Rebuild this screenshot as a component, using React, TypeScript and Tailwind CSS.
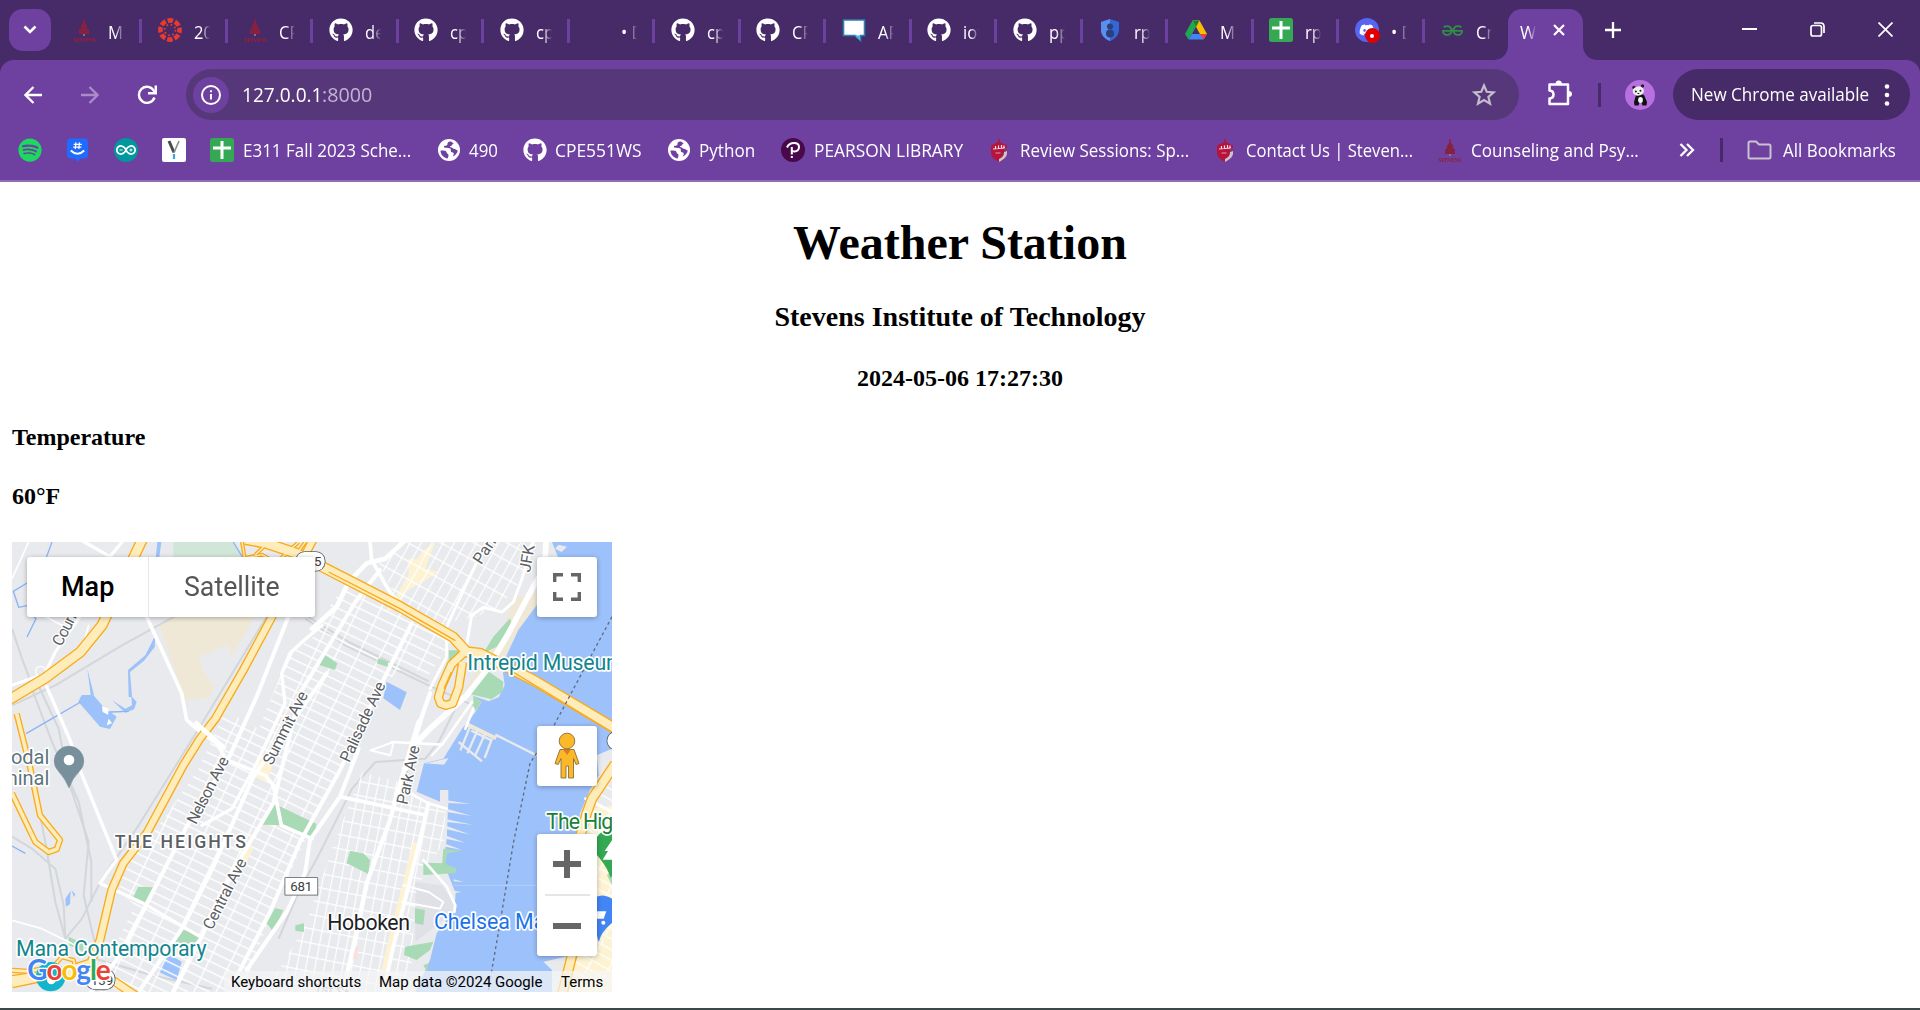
import { useLayoutEffect, useRef, useState, type ReactNode } from "react";
import { FaDiscord, FaGithub, FaSpotify } from "react-icons/fa";
import { SiArduino, SiGeeksforgeeks } from "react-icons/si";

/* Single-line label squeezed or stretched to an exact width. */
function Fit({ w, children, className = "" }: { w: number; children: ReactNode; className?: string }) {
  const ref = useRef<HTMLSpanElement>(null);
  const [scale, setScale] = useState(1);
  useLayoutEffect(() => {
    if (ref.current) setScale(w / ref.current.offsetWidth);
  }, [w]);
  return (
    <span className={`block shrink-0 whitespace-nowrap ${className}`} style={{ width: w }}>
      <span ref={ref} className="inline-block origin-left" style={{ transform: `scaleX(${scale})` }}>
        {children}
      </span>
    </span>
  );
}

const Github = () => <FaGithub className="size-6 text-white" />;

const Globe = () => (
  <svg viewBox="0 0 22 22" className="size-[22px]">
    <circle cx="11" cy="11" r="11" fill="#fff" />
    <path d="M13 2.500c-3 0-3.500 1.200-3.500 2.600 0 1.500-1.500 1.800-3.500 1.800v1.600c3 .4 6 .3 6.500 1.300.8 1.500-.2 2.500.8 3.300 1 .6 2.500.2 2.500 1.800 0 1-1 1.400-1 2.600 2.500-1 4.700-3.400 4.900-6-1.700-.3-2.200-1.700-3.900-1.700-1.400 0-1.400-1.600-3-1.600-1.200 0-1.200-1.300 0-1.300 1.600 0 1.200-1.800 2.900-2.300z" fill="#6e41a1" />
    <path d="M2.500 11.500c2.500.2 5.500-.3 6 1.700.4 1.600 2 1.200 2 3 0 1.500-.7 2-.7 3.300C5.500 19 2.600 15.500 2.500 11.500z" fill="#6e41a1" />
  </svg>
);

const Stevens = () => (
  <svg viewBox="0 0 24 24" className="size-6">
    <path d="M11.500 1h1l.5 4 2 2.500V10l2 1.500V16H7v-4.500L9 10V7.500L11 5z" fill="#8f1f3a" />
    <path d="M9 11.500l2.500-1.500M13.500 7.500L10.500 9M15.500 12l-3.500 2.500M8 14h2.500M14 10l1.500 1" stroke="#4f2f62" strokeWidth="0.9" />
    <circle cx="12" cy="17" r="1" fill="#8b87a5" />
    <text x="0.5" y="23.8" fontSize="6" textLength="23" fontWeight="700" fill="#8f1f3a" fontFamily="Liberation Serif">STEVENS</text>
  </svg>
);

const Canvas = () => (
  <svg viewBox="0 0 24 24" className="size-6">
    <circle cx="12" cy="12" r="9.600" fill="none" stroke="#e63b2e" strokeWidth="4.600" strokeDasharray="5.5 2.04" strokeDashoffset="2.7" />
    <circle cx="12" cy="12" r="5.400" fill="none" stroke="#e63b2e" strokeWidth="1.800" strokeDasharray="1.6 2.64" />
  </svg>
);

const Chat = () => (
  <svg viewBox="0 0 24 24" className="size-6">
    <path d="M1.500 2h21v15.500h-4v5l-5-5h-12z" fill="#fff" stroke="#2f7fb0" strokeWidth="1.600" />
    <path d="M12.500 17.500h5.500v5z" fill="#4fb3e0" />
  </svg>
);

const BlueShield = () => (
  <svg viewBox="0 0 24 24" className="size-6">
    <path d="M12 1l9 3v8c0 5-4 9-9 11-5-2-9-6-9-11V4z" fill="#3367d6" />
    <path d="M12 1v22c-5-2-9-6-9-11V4z" fill="#5c8df0" />
    <circle cx="12" cy="8.500" r="3" fill="#2b3f78" />
    <circle cx="12" cy="15.500" r="4" fill="#2b3f78" />
  </svg>
);

const Drive = () => (
  <svg viewBox="0 0 24 24" className="size-6">
    <path d="M8.500 2.500h7L8 16l-3.500 5.500L1 16z" fill="#22a652" />
    <path d="M15.500 2.500L23 16h-7L8.500 2.500z" fill="#fbbc04" />
    <path d="M8.500 2.500h7L12 9z" fill="#188038" />
    <path d="M4.500 21.500L8 16h15l-3.500 5.500z" fill="#4285f4" />
    <path d="M16 16h7l-3.500 5.500z" fill="#ea4335" />
  </svg>
);

const Sheets = () => (
  <svg viewBox="0 0 24 24" className="size-6">
    <rect width="24" height="24" rx="2.500" fill="#34a853" />
    <path d="M12 3v18M3 10h18" stroke="#fff" strokeWidth="3" />
  </svg>
);

const Discord = () => (
  <span className="relative flex size-6 items-center justify-center rounded-full bg-[#5865f2]">
    <FaDiscord className="size-4 text-white" />
    <span className="absolute -right-px -bottom-px flex size-[15px] items-center justify-center rounded-full bg-[#e00000]">
      <span className="size-1 rounded-full bg-white" />
    </span>
  </span>
);

const Shield = () => (
  <svg viewBox="0 0 16 24" className="h-6 w-4">
    <path d="M8 0l1.500 4.500L13 6l3 1.500v8c0 3.500-4 6.500-8 8.500-4-2-8-5-8-8.500v-8L3 6l3.500-1.500z" fill="#b5153c" />
    <path d="M16 13v2.500c0 3.500-4 6.500-8 8.500v-3c4-2 5-4 5-7z" fill="#c9c5cc" />
    <path d="M2 11l12-1M4.500 8v3M7.500 7.500v3M10.500 7v3M13 7.500v3" stroke="#f1dfe6" strokeWidth="1.200" />
    <path d="M13 11.500h3" stroke="#5d4a9a" strokeWidth="2" />
    <path d="M4.500 15h5" stroke="#e07f98" strokeWidth="1.200" />
  </svg>
);

const tabs: { icon: ReactNode; title: string }[] = [
  { icon: <Stevens />, title: "M" },
  { icon: <Canvas />, title: "20" },
  { icon: <Stevens />, title: "CP" },
  { icon: <Github />, title: "de" },
  { icon: <Github />, title: "cp" },
  { icon: <Github />, title: "cp" },
  { icon: null, title: "• D" },
  { icon: <Github />, title: "cp" },
  { icon: <Github />, title: "CP" },
  { icon: <Chat />, title: "AP" },
  { icon: <Github />, title: "iot" },
  { icon: <Github />, title: "pp" },
  { icon: <BlueShield />, title: "rp" },
  { icon: <Drive />, title: "M" },
  { icon: <Sheets />, title: "rp" },
  { icon: <Discord />, title: "• D" },
  { icon: <SiGeeksforgeeks className="size-[21px] text-[#2f8d46]" />, title: "Cr" },
];

function TabStrip() {
  return (
    <div className="flex h-[60px] items-end bg-[#472b68]">
      <div className="mb-[9px] ml-[9px] flex size-[42px] items-center justify-center rounded-[14px] bg-[#6e41a1]">
        <svg viewBox="0 0 14 10" className="h-[10px] w-[14px]" fill="none" stroke="#fff" strokeWidth="2.600">
          <path d="M1.500 1.500L7 7l5.500-5.500" />
        </svg>
      </div>
      <div className="ml-[21px] flex h-[60px] w-[1436px] shrink-0">
        {tabs.map((t, i) => (
          <div key={i} className="flex h-[60px] w-[85.5px] shrink-0 items-center">
            <span className="flex size-6 shrink-0 items-center justify-center">{t.icon}</span>
            <span className="mt-1 ml-3 w-4 overflow-hidden text-[17.5px] whitespace-nowrap text-white [mask-image:linear-gradient(to_right,black_45%,transparent)]">
              <span className="inline-block origin-left scale-x-95">{t.title}</span>
            </span>
            {i < tabs.length - 1 && <span className="mt-0.5 ml-[15px] h-6 w-[3px] bg-[#6e41a1]" />}
          </div>
        ))}
      </div>
      <div className="relative flex h-[51px] w-[75px] shrink-0 items-center rounded-t-[14px] bg-[#6e41a1] pl-3">
        <svg viewBox="0 0 15 15" className="absolute bottom-0 -left-[15px] size-[15px]">
          <path d="M15 0v15H0C9 15 15 9 15 0z" fill="#6e41a1" />
        </svg>
        <svg viewBox="0 0 15 15" className="absolute -right-[15px] bottom-0 size-[15px]">
          <path d="M0 0v15h15C6 15 0 9 0 0z" fill="#6e41a1" />
        </svg>
        <span className="-mt-1 w-4 overflow-hidden text-[17.5px] whitespace-nowrap text-white [mask-image:linear-gradient(to_right,black_50%,transparent)]">W</span>
        <svg viewBox="0 0 12 12" className="-mt-2.5 ml-[17px] size-3" stroke="#fff" strokeWidth="2.200">
          <path d="M1 1l10 10M11 1L1 11" />
        </svg>
      </div>
      <svg viewBox="0 0 16 16" className="mb-[22px] ml-[22px] size-4" stroke="#fff" strokeWidth="2.300">
        <path d="M8 0v16M0 8h16" />
      </svg>
      <div className="mr-[27px] mb-[23px] ml-auto flex h-4 items-center gap-[53px]">
        <span className="h-[2px] w-[15px] bg-white" />
        <svg viewBox="0 0 15 15" className="size-[15px]" fill="none" stroke="#fff" strokeWidth="1.700">
          <rect x="1" y="3.500" width="10.500" height="10.500" rx="2" />
          <path d="M4 1h6.500Q14 1 14 4.500V11" />
        </svg>
        <svg viewBox="0 0 15 15" className="size-[15px]" stroke="#fff" strokeWidth="1.700">
          <path d="M0.500 0.500l14 14M14.500 0.500l-14 14" />
        </svg>
      </div>
    </div>
  );
}

const Panda = () => (
  <svg viewBox="0 0 30 30" className="size-[30px]">
    <circle cx="15" cy="15" r="15" fill="#b86fe0" />
    <path d="M11 15q4-2 8 0l3 7-.5 3.500h-4l-1-3h-2l-1 3h-4L9 22z" fill="#111" />
    <ellipse cx="15.500" cy="20" rx="2.400" ry="3" fill="#f2f2f2" />
    <circle cx="9" cy="7.500" r="1.700" fill="#222" />
    <circle cx="17.500" cy="6" r="1.700" fill="#222" />
    <ellipse cx="13.300" cy="11" rx="5.600" ry="4.600" transform="rotate(-8 13.300 11)" fill="#efefef" />
    <circle cx="10.800" cy="11.500" r="1" fill="#222" />
    <circle cx="15.500" cy="10.700" r="1" fill="#222" />
    <path d="M12.500 13.500h1.800" stroke="#222" />
  </svg>
);

function Toolbar() {
  return (
    <div className="bg-[#472b68]">
      <div className="flex h-[69px] items-center rounded-t-[14px] bg-[#6e41a1] pl-[24px]">
        <svg viewBox="0 0 18 18" className="size-[18px]" fill="none" stroke="#fff" strokeWidth="2.300">
          <path d="M18 9H1.500M9.500 1L1.500 9l8 8" />
        </svg>
        <svg viewBox="0 0 18 18" className="ml-[39px] size-[18px]" fill="none" stroke="#a98cc9" strokeWidth="2.300">
          <path d="M0 9h16.500M8.500 1l8 8-8 8" />
        </svg>
        <svg viewBox="0 0 20 20" className="ml-[38px] size-5" fill="none" stroke="#fff" strokeWidth="2.400">
          <path d="M17.500 12.500A8 8 0 1 1 17 6l1 2" />
          <path d="M18.800 0.500V8.200H11" />
        </svg>
        <div className="ml-[29px] flex h-[51px] w-[1333px] items-center rounded-full bg-[#563779] pl-[7px]">
          <span className="flex size-9 items-center justify-center rounded-full bg-[#6e41a1]">
            <svg viewBox="0 0 20 20" className="size-5" fill="none" stroke="#fff" strokeWidth="2">
              <circle cx="10" cy="10" r="9" />
              <path d="M10 9v5.500M10 5.200v2" />
            </svg>
          </span>
          <Fit w={80} className="-mt-px ml-[13px] text-[20.5px] text-white">127.0.0.1</Fit>
          <Fit w={50} className="-mt-px text-[20.5px] text-[#c3b3d4]">:8000</Fit>
          <svg viewBox="0 0 24 24" className="mr-[23px] ml-auto size-6" fill="none" stroke="#c3bccb" strokeWidth="2.200">
            <path d="M12 2.500l2.700 6.300 6.900.6-5.200 4.500 1.600 6.700-6-3.600-6 3.600 1.600-6.700L2.400 9.400l6.900-.6z" />
          </svg>
        </div>
        <svg viewBox="0 0 26 26" className="-mt-1 ml-7 size-[26px]" fill="none" stroke="#fff" strokeWidth="2.500">
          <path d="M2.500 4.500H21V24H2.500v-5.500q4-.3 4-3.900t-4-4z" strokeLinejoin="round" />
          <path d="M8.500 4q0-3.500 3.200-3.500T15 4zM21.500 11q3.500 0 3.500 3t-3.500 3z" fill="#fff" stroke="none" />
        </svg>
        <span className="ml-[25px] h-6 w-[3px] bg-[#472b68]" />
        <span className="ml-6"><Panda /></span>
        <div className="ml-[18px] flex h-[51px] w-[237px] items-center rounded-full bg-[#472b68] pl-[18px] text-[18px] text-white">
          <Fit w={178}>New Chrome available</Fit>
          <svg viewBox="0 0 6 22" className="ml-[15px] h-[22px] w-1.5" fill="#fff">
            <circle cx="3" cy="2.500" r="2.300" />
            <circle cx="3" cy="11" r="2.300" />
            <circle cx="3" cy="19.500" r="2.300" />
          </svg>
        </div>
      </div>
    </div>
  );
}

function Bookmarks() {
  return (
    <div className="flex h-[53px] items-center border-b-2 border-[#8f6cb6] bg-[#6e41a1] pb-[9px] pl-[18px] text-[18px] text-white">
      <span className="flex size-6"><FaSpotify className="size-6 text-[#1ed760]" /></span>
      <svg viewBox="0 0 22 24" className="ml-[25px] h-6 w-[21px]">
        <path d="M4 0h14q4 0 4 4v13q0 4-4 4h-4l-3 3-3-3H4q-4 0-4-4V4q0-4 4-4z" fill="#1f6bff" />
        <path d="M9.300 4l-.6 7M13 4l-.6 7M7 6h8.500M6.500 9h8.500" stroke="#fff" strokeWidth="1.300" />
        <path d="M4 12.500q7 7 14 0" fill="none" stroke="#fff" strokeWidth="2" />
      </svg>
      <span className="ml-[26px] flex size-6 items-center justify-center rounded-full bg-[#00979d]"><SiArduino className="size-5 text-white" /></span>
      <svg viewBox="0 0 24 24" className="ml-6 size-6">
        <rect width="24" height="24" rx="2" fill="#fff" />
        <path d="M7 3l5 11.500" stroke="#4a4a4a" strokeWidth="3" />
        <path d="M12 14.500L17 3" stroke="#8a8a8a" strokeWidth="1.600" />
        <path d="M12 16v5" stroke="#3aa6dd" strokeWidth="2.200" />
      </svg>
      <span className="ml-6"><Sheets /></span>
      <Fit w={168} className="ml-[9px]">E311 Fall 2023 Sche...</Fit>
      <span className="ml-[27px]"><Globe /></span>
      <Fit w={29} className="ml-[9px]">490</Fit>
      <span className="ml-[25px]"><Github /></span>
      <Fit w={87} className="ml-2">CPE551WS</Fit>
      <span className="ml-[26px]"><Globe /></span>
      <Fit w={56} className="ml-[9px]">Python</Fit>
      <svg viewBox="0 0 24 24" className="ml-[26px] size-6">
        <circle cx="12" cy="12" r="12" fill="#48084a" />
        <path d="M6 9.500Q8 5 13 5t5 4-4.500 4.500q-2.200 0-2.200-1.500M10.800 9v7.500M10.800 18v2" fill="none" stroke="#fff" strokeWidth="2" />
      </svg>
      <Fit w={149} className="ml-[9px]">PEARSON LIBRARY</Fit>
      <span className="ml-7"><Shield /></span>
      <Fit w={169} className="ml-[13px]">Review Sessions: Sp...</Fit>
      <span className="ml-7"><Shield /></span>
      <Fit w={167} className="ml-[13px]">Contact Us | Steven...</Fit>
      <span className="ml-[25px]"><Stevens /></span>
      <Fit w={168} className="ml-[9px]">Counseling and Psy...</Fit>
      <svg viewBox="0 0 16 14" className="ml-10 h-3.5 w-4" fill="none" stroke="#fff" strokeWidth="2.300">
        <path d="M1.500 1l6 6-6 6M8 1l6 6-6 6" />
      </svg>
      <span className="ml-[25px] h-6 w-[3px] bg-[#472b68]" />
      <svg viewBox="0 0 25 20" className="ml-6 h-5 w-[25px]" fill="none" stroke="#c9c2cf" strokeWidth="2">
        <path d="M1.500 3q0-1.500 1.500-1.500h6L12 4.500h10q1.500 0 1.500 1.500v11q0 1.500-1.500 1.500H3Q1.500 18.500 1.500 17z" />
      </svg>
      <Fit w={113} className="ml-[11px]">All Bookmarks</Fit>
    </div>
  );
}

const highways: { d: string; w: number }[] = [
  { d: "M14,515 L54,674 L84,820 L144,894 L134,922 L110,930 L70,900 L0,754", w: 19 },
  { d: "M690,0 L698,48 L750,38 L806,70", w: 12 },
  { d: "M730,38 L770,0 M806,50 L860,0 M850,40 L880,0", w: 12 },
  { d: "M122,1275 L150,1245 L185,1255 L190,1280", w: 14 },
  { d: "M0,1325 L150,1294 L240,1285 L310,1320 L372,1362", w: 28 },
  { d: "M0,1285 L50,1288 L120,1275", w: 16 },
  { d: "M392,-10 L330,120 L270,250 L205,330 L100,408 L-10,474", w: 34 },
  { d: "M905,-10 L764,254 L694,384 L610,530 L564,590 L514,670 L404,874 L334,964 L299,1044 L264,1194 L236,1262 L150,1290 L-10,1314", w: 27 },
  { d: "M564,590 Q540,610 556,620", w: 12 },
  { d: "M1356,332 L1318,368 L1290,430 L1279,466 L1286,485 L1302,490 L1322,484 L1340,436 L1352,360", w: 28 },
  { d: "M700,-8 L764,4 L854,34 L934,76 L1164,194 L1324,286 L1364,330 L1404,334 L1564,414 L1810,560", w: 34 },
  { d: "M1810,665 L1740,770 L1724,814 L1700,900 L1680,1240 L1650,1360", w: 32 },
];

const streets: { d: string; w: number }[] = [
  { d: "M404,224 L509,454 L524,534 L564,569 L614,604 L644,654 L760,700 L784,730 L808,850 L900,890", w: 11 },
  { d: "M829,224 L734,464 L654,640 L524,854 L394,1104 L314,1254 L230,1360", w: 12 },
  { d: "M930,250 L870,300 L834,334 L809,394 L819,484 L734,664 L660,800 L570,850", w: 10 },
  { d: "M944,394 L724,704 L604,974 L514,1154 L384,1344", w: 12 },
  { d: "M1174,0 L1120,50 L1064,64 L1010,120 L974,194 L900,260", w: 14 },
  { d: "M1104,84 L1030,180 L864,454 L784,784 L664,984 L564,1194 L484,1350", w: 12 },
  { d: "M1199,244 L1104,434 L984,684 L864,900 L774,1110 L660,1330", w: 12 },
  { d: "M1040,620 L984,764 L894,894 L879,994 L824,1110 L704,1284", w: 12 },
  { d: "M1254,454 L1219,554 L1174,690 L1134,834 L1064,1024 L1024,1214 L994,1344", w: 13 },
  { d: "M1222,540 L1180,680", w: 18 },
  { d: "M1249,784 L1224,894 L1174,1094 L1144,1214 L1114,1350", w: 12 },
  { d: "M984,764 L1239,819", w: 11 },
  { d: "M1170,740 L1249,784 L1304,800", w: 8 },
  { d: "M1234,954 L1304,1034 L1330,1090 L1327,1110", w: 8 },
  { d: "M1174,1030 L1250,1050 L1294,1080 L1284,1100 L1170,1080", w: 6 },
  { d: "M0,429 L74,404 L104,384 L130,330 L204,224", w: 9 },
  { d: "M200,-10 L294,44 L330,0 M294,44 L250,90", w: 10 },
  { d: "M0,110 L50,0", w: 5 },
  { d: "M74,210 L160,255 M210,320 L230,250", w: 5 },
  { d: "M104,434 L174,594 L204,684 L314,954 L284,994 L264,1024 L394,1084 L564,1184", w: 10 },
  { d: "M1602,0 L1598,80 L1564,134 L1484,284 L1424,384 L1364,460 L1254,560 L1215,600", w: 17 },
  { d: "M1564,0 L1530,110 L1504,180 L1470,210 L1414,196 L1379,220 L1364,310", w: 9 },
  { d: "M1424,0 L1364,124 L1304,254 L1304,344 L1254,440", w: 9 },
  { d: "M1074,0 L1079,54 L1124,134 L1164,194", w: 11 },
  { d: "M1360,560 L1384,500 M1140,600 L1290,608 L1380,480", w: 8 },
  { d: "M1075,625 L1145,600 L1135,640 Z M1290,608 L1260,640", w: 6 },
  { d: "M1720,770 L1800,810", w: 8 },
  { d: "M0,1135 L90,1160 L190,1210", w: 5 },
];

const rails: string[] = [
  "M764,224 L560,560 L380,850 L270,1010 L210,1130 L160,1190",
  "M0,490 L130,430 L330,310 L530,200",
  "M52,420 L120,600 L200,780 L238,960 L238,1080",
  "M74,420 L140,560 L170,720 L230,900 L215,1060 L250,1210",
  "M0,884 L60,920 L130,980 L155,1090 L160,1190",
  "M60,700 L100,900 L130,1080 L160,1190",
  "M0,260 L30,350 L60,430",
  "M880,230 L1000,310 L1250,430 L1450,520 L1570,600",
  "M890,225 L1010,300 L1250,418",
  "M1330,500 L1280,600 L1240,650 L1090,660 L1020,740 L930,920 L860,1050 L800,1190",
  "M250,1250 L420,1300 L600,1340",
];

const parks: string[] = [
  "784,784 914,846 898,892 820,850 749,848",
  "379,1034 424,1036 404,1086 362,1069",
  "504,1159 564,1184 544,1209 486,1199",
  "789,1099 814,1104 784,1169 764,1144",
  "169,1184 214,1204 214,1229 172,1210",
  "939,339 976,364 969,384 922,369",
  "1099,349 1129,359 1126,374 1094,364",
  "1494,229 1499,244 1454,314 1414,334 1444,284",
  "1424,385 1474,419 1471,449 1439,472 1374,456",
  "1310,325 1350,325 1310,370",
  "1384,460 1409,480 1390,508 1384,490",
  "1014,926 1054,934 1074,954 1069,996 1004,964",
  "1234,962 1294,964 1334,979 1329,994 1234,999",
  "1294,920 1350,926 1306,934 1300,970 1290,970",
  "1209,1099 1239,1104 1234,1149 1209,1144",
  "1179,1214 1264,1199 1254,1224 1214,1254 1176,1239",
  "850,1150 876,1144 876,1170 850,1166",
  "864,838 888,838 918,860 905,890 864,875",
  "1234,1270 1250,1264 1246,1290",
  "1785,1000 1800,980 1800,1030",
  "1170,684 1190,684 1184,696",
];

const piers = [
  "M1304,775 L1376,786 L1306,783 Z",
  "M1304,800 L1380,822 L1304,810 Z",
  "M1304,832 L1382,848 L1304,840 Z",
  "M1304,852 L1376,878 L1304,862 Z",
  "M1300,880 L1360,902 L1300,890 Z",
  "M1300,905 L1350,924 L1300,914 Z",
  "M1325,1012 L1354,1020 L1325,1018 Z",
  "M1327,1046 L1350,1050 L1327,1053 Z",
];

function Streetname({ x, y, r, len, children }: { x: number; y: number; r: number; len: number; children: string }) {
  return (
    <text transform={`translate(${x} ${y}) rotate(${r})`} textLength={len} fontSize="48" fill="#5b5e63" stroke="#fff" strokeWidth="8">
      {children}
    </text>
  );
}

function MapCanvas() {
  return (
    <svg viewBox="0 0 1800 1350" className="h-[450px] w-[600px]" fontFamily="Roboto, sans-serif" paintOrder="stroke" strokeLinejoin="round">
      <defs>
        <pattern id="heights" width="60" height="28" patternUnits="userSpaceOnUse" patternTransform="rotate(26)">
          <path d="M0 0H60M0 0V28" stroke="#fff" strokeWidth="8" />
        </pattern>
        <pattern id="union" width="29" height="48" patternUnits="userSpaceOnUse" patternTransform="rotate(29)">
          <path d="M0 0H29M0 0V48" stroke="#fff" strokeWidth="7" />
        </pattern>
        <pattern id="hoboken" width="27" height="42" patternUnits="userSpaceOnUse" patternTransform="rotate(11)">
          <path d="M0 0H27M0 0V42" stroke="#fff" strokeWidth="7" />
        </pattern>
        <pattern id="chelsea" width="56" height="28" patternUnits="userSpaceOnUse" patternTransform="rotate(29)">
          <path d="M0 0H56M0 0V28" stroke="#fff" strokeWidth="7" />
        </pattern>
      </defs>
      <rect width="1800" height="1350" fill="#e8eaed" />
      <path d="M484,0 H664 L700,50 V100 H484Z" fill="#d0e6d9" />
      <path d="M444,254 L470,224 L728,224 L655,350 L655,320 L640,310 L560,346 Q575,400 608,432 L590,466 L524,474 L532,510Z" fill="#f0e8d6" />
      <path d="M1230,30 L1270,0 L1240,80 L1280,90 L1180,150 L1150,200 L1120,210 L1165,140Z M1190,50 h50 v50 h-50z" fill="#fdf3d3" />
      <path d="M1210,1020 L1290,1030 L1324,1080 L1324,1110 L1210,1200Z" fill="#dfe1e6" />

      <g fill="none" stroke="#d3d6da" strokeWidth="6">
        {rails.map((d) => <path key={d} d={d} />)}
      </g>
      <path d="M1500,170 L1580,150 L1574,210 L1519,264 L1470,370 L1440,380 L1400,450 L1360,440 L1480,250Z" fill="#f0e8d6" />

      <path
        d="M1620,0 H1800 V620 L1754,640 L1760,700 L1734,744 L1704,814 L1690,900 L1680,1240 L1594,1259 L1620,1284 V1350 H1210 L1254,1254 L1274,1174 L1327,1104 L1331,1054 L1319,1024 L1294,960 L1304,894 L1309,784 L1299,744 L1284,779 L1214,749 L1236,664 L1294,650 L1350,560 L1389,512 L1409,480 L1385,462 L1430,478 L1460,466 L1478,430 L1470,370 L1519,264 L1574,190 L1640,50Z"
        fill="#9dc1fa"
      />
      <path d="M1284,744 L1309,744 L1309,784 L1284,784Z M1216,670 L1310,648 L1296,668 L1240,664Z M1640,8 l25,6 l-16,16 l-20,-10z" fill="#e8eaed" />
      <g fill="#e8eaed">{piers.map((d) => <path key={d} d={d} />)}</g>
      <path d="M1365,540 L1455,584 L1450,594 L1360,552Z" fill="#f0e8d6" />
      <g fill="none" stroke="#e8eaed" strokeWidth="7">
        <path d="M1375,552 L1345,625 M1398,562 L1366,634 M1420,574 L1388,644 M1440,590 L1418,648 M1378,566 L1440,596 M1340,600 L1410,658 M1450,578 L1574,640" />
      </g>

      <g fill="#9dc1fa">
        <path d="M209,459 L244,459 L274,494 L314,524 L294,561 L264,554 L229,514 L199,479Z" />
        <path d="M226,380 L246,459 L236,459Z M300,475 L340,500 L360,490 L358,462 L374,480 L366,502 L340,512Z" />
        <path d="M436,0 h12 l-8,60 h-10z M430,280 L428,315 L396,356 L354,390 L360,465 L350,465 L348,384 L400,340Z" />
        <path d="M1124,419 L1184,451 L1164,504 L1114,469Z" />
        <path d="M459,1249 L476,1240 L509,1259 L494,1314 L439,1289Z M160,1070 l16,-24 l-2,40 l-12,8z M178,1045 l12,12 l-4,8z" />
      </g>
      <path d="M120,0 L98,60 M206,480 L120,530 L42,575 M45,285 L72,230 L66,225 M50,120 L4,148 L20,196 L48,190 M0,912 L40,934 M664,0 L700,60 M294,510 L350,508" fill="none" stroke="#8ab4f8" strokeWidth="4" />
      <path d="M270,492 l20,8 l-2,18 l-16,-8z M290,530 l10,14 l-16,6z" fill="#fff" />

      <g>
        <path d="M1164,0 L1560,0 L1530,110 L1460,200 L1370,230 L1300,240 L1300,275 L1164,194 L1100,60Z" fill="url(#union)" />
        <path d="M900,290 L960,180 L1010,120 L1320,300 L1250,400 L1180,370 L1104,434 L984,684 L904,840 L840,980 L780,1110 L690,1350 L230,1350 L300,1230 L370,1090 L320,1050 L334,980 L420,880 L560,680 L640,505 L740,560 L834,330Z" fill="url(#heights)" />
        <path d="M1050,690 L1160,720 L1249,784 L1300,800 L1300,890 L1260,960 L1214,1040 L1204,1160 L1200,1260 L1160,1350 L760,1350 L880,1150 L900,1090 L974,884Z" fill="url(#hoboken)" />
      </g>
      <path d="M1800,790 L1740,800 L1700,1240 L1655,1350 H1800Z" fill="#fdf3d3" />
      <path d="M1800,690 L1740,780 L1700,1240 L1655,1350 H1800Z" fill="url(#chelsea)" />
      <path d="M1204,900 L1222,904 L1180,1090 L1140,1240 L1124,1290 L1108,1286 L1140,1150Z M710,910 l14,8 l-24,50 l-12,-6z M745,640 l40,20 l-20,60 l-40,-20z" fill="#fdf3d3" />
      <path d="M1026,1214 l14,2 l-6,36 h-14z" fill="#fbdfdb" />

      <g fill="#a8dab5">{parks.map((p) => <polygon key={p} points={p} />)}</g>
      <g fill="none" stroke="#fff" strokeLinecap="round">
        {streets.map((s) => <path key={s.d} d={s.d} strokeWidth={s.w} />)}
      </g>
      <circle cx="86" cy="388" r="13" fill="#e8eaed" stroke="#fff" strokeWidth="8" />

      <g fill="none" stroke="#f9ab1a">
        {highways.map((h) => <path key={h.d} d={h.d} strokeWidth={h.w} />)}
      </g>
      <g fill="none" stroke="#feecbb">
        {highways.map((h) => <path key={h.d} d={h.d} strokeWidth={h.w - 8} />)}
      </g>
      <path d="M950,90 L1164,200 L1330,296 M1480,376 L1800,570 M1318,390 L1296,440" fill="none" stroke="#f9ab1a" strokeWidth="4" />
      <path d="M548,540 L640,620" stroke="#fff" strokeWidth="14" />
      <path d="M1800,224 L1624,554 L1554,664 L1504,904 L1464,1144 L1429,1344" fill="none" stroke="#5f6b80" strokeWidth="4" strokeDasharray="9 9" />
      <path d="M1320,1030 H1580" stroke="#b4d0fb" strokeWidth="3" />

      {/* route shields */}
      <g fill="#fff" stroke="#5b5e63" strokeWidth="5">
        <rect x="852" y="30" width="86" height="56" rx="26" />
        <rect x="222" y="1282" width="86" height="60" rx="28" />
        <rect x="820" y="1008" width="96" height="50" />
        <circle cx="1812" cy="596" r="26" />
      </g>
      <g fill="#3c4043" fontSize="40">
        <text x="861" y="72">495</text>
        <text x="236" y="1328">139</text>
        <text x="835" y="1048" textLength="66">681</text>
      </g>

      <Streetname x={148} y={316} r={-63} len={104}>Coun</Streetname>
      <Streetname x={780} y={672} r={-63} len={240}>Summit Ave</Streetname>
      <Streetname x={552} y={850} r={-63} len={220}>Nelson Ave</Streetname>
      <Streetname x={600} y={1166} r={-63} len={232}>Central Ave</Streetname>
      <Streetname x={1012} y={664} r={-65} len={260}>Palisade Ave</Streetname>
      <Streetname x={1186} y={790} r={-78} len={180}>Park Ave</Streetname>
      <Streetname x={1408} y={70} r={-57} len={98}>Park</Streetname>
      <Streetname x={1554} y={92} r={-80} len={82}>JFK</Streetname>
      <text transform="translate(905 1350) rotate(10)" fontSize="40" fill="#9aa0a6">1st St</text>

      {/* place pins */}
      <path d="M171,737 Q160,710 140,688 A44,44 0 1 1 202,688 Q180,710 171,737Z" fill="#78909c" stroke="#607d8b" strokeWidth="2" />
      <circle cx="171" cy="654" r="16" fill="#fff" />
      <path d="M1796,1008 Q1788,980 1764,950 A50,50 0 1 1 1830,950Z" fill="#34a853" />
      <path d="M1800,895 l-22,32 h10 l-16,26 h28z" fill="#fff" />
      <path d="M1760,1200 Q1750,1160 1740,1140 A46,46 0 1 1 1796,1146 Q1768,1170 1760,1200Z" fill="#4285f4" />
      <path d="M1745,1108 h38 l-8,22 h-30z" fill="#fff" />
      <circle cx="1774" cy="1142" r="6" fill="#fff" />
      <circle cx="116" cy="1304" r="44" fill="#12b5cb" />
      <circle cx="118" cy="1314" r="13" fill="#fff" />

      <g stroke="#fff" strokeWidth="10" fontSize="64">
        <text x="308" y="918" textLength="394" fontSize="53" fontWeight="500" fill="#5b5e63">THE HEIGHTS</text>
        <text x="946" y="1165" textLength="248" fill="#202124">Hoboken</text>
        <text x="1266" y="1161" textLength="442" fill="#1a73e8">Chelsea Market</text>
        <text x="1366" y="385" textLength="472" fill="#12858d">Intrepid Museum</text>
        <text x="1603" y="861" textLength="352" fill="#188038">The High Line</text>
        <text x="12" y="1243" textLength="572" fill="#12858d">Mana Contemporary</text>
        <text x="112" y="666" fontSize="60" textAnchor="end" fill="#5b7480">Intermodal</text>
        <text x="112" y="730" fontSize="60" textAnchor="end" fill="#5b7480">Terminal</text>
      </g>
      <text x="46" y="1313" fontFamily="Lato" fontWeight="700" fontSize="84" textLength="250" stroke="#fff" strokeWidth="8">
        <tspan fill="#4285f4">G</tspan>
        <tspan fill="#ea4335">o</tspan>
        <tspan fill="#fbbc04">o</tspan>
        <tspan fill="#4285f4">g</tspan>
        <tspan fill="#34a853">l</tspan>
        <tspan fill="#ea4335">e</tspan>
      </text>
    </svg>
  );
}

function WeatherMap() {
  return (
    <div className="relative ml-3 h-[450px] w-[600px] overflow-hidden font-[Roboto,sans-serif]">
      <MapCanvas />
      <div className="absolute top-[15px] left-[15px] flex h-[60px] w-[288px] rounded-[3px] bg-white text-[27px] shadow-[0_1px_5px_rgba(0,0,0,0.3)]">
        <span className="flex w-[122px] items-center justify-center border-r border-gray-200 font-medium text-black"><Fit w={53}>Map</Fit></span>
        <span className="flex flex-1 items-center justify-center text-[#565656]"><Fit w={96}>Satellite</Fit></span>
      </div>
      <div className="absolute top-[15px] right-[15px] flex size-[60px] items-center justify-center rounded-[3px] bg-white shadow-[0_1px_5px_rgba(0,0,0,0.3)]">
        <svg viewBox="0 0 28 28" className="size-7" fill="none" stroke="#666" strokeWidth="3.400">
          <path d="M1.700 9V1.700H10M18 1.700h8.300V9M26.300 19v7.300H18M10 26.300H1.700V19" />
        </svg>
      </div>
      <div className="absolute top-[184px] right-[15px] flex size-[60px] items-center justify-center rounded-[3px] bg-white shadow-[0_1px_5px_rgba(0,0,0,0.3)]">
        <svg viewBox="0 0 26 48" className="h-12 w-[26px]" fill="#fbb829" stroke="#8a6d3b" strokeWidth="0.900">
          <path d="M6 17.500h14l5 14-3 1-2.500-6V46h-5V34h-2.500v12H7V26.500l-2.800 6-3.200-1z" />
          <path d="M9 17.500h8L13 23z" fill="#e07b1f" stroke="none" />
          <circle cx="13" cy="9" r="7.800" />
        </svg>
      </div>
      <div className="absolute top-[292px] right-[15px] flex h-[122px] w-[60px] flex-col items-center rounded-[3px] bg-white shadow-[0_1px_5px_rgba(0,0,0,0.3)]">
        <svg viewBox="0 0 28 28" className="mt-4 size-7" stroke="#666" strokeWidth="6">
          <path d="M14 0v28M0 14h28" />
        </svg>
        <span className="mt-4 h-[2px] w-[45px] bg-[#e6e6e6]" />
        <span className="mt-[27px] h-1.5 w-7 bg-[#666]" />
      </div>
      <div className="absolute right-0 bottom-0 flex h-[21px] w-[388px] items-center bg-[#f5f5f5]/70 pt-0.5 pl-[7px] text-[15px] text-black">
        <Fit w={130}>Keyboard shortcuts</Fit>
        <Fit w={163} className="ml-[18px]">Map data ©2024 Google</Fit>
        <Fit w={42} className="ml-[19px]">Terms</Fit>
      </div>
    </div>
  );
}

export default function App() {
  return (
    <div className="flex h-[1010px] w-[1920px] flex-col overflow-hidden bg-white font-['Open_Sans',sans-serif]">
      <TabStrip />
      <Toolbar />
      <Bookmarks />
      <main className="flex flex-col font-['Liberation_Serif',serif] font-bold text-black">
        <h1 className="mt-[33px] text-center text-[48px] leading-[55px]">Weather Station</h1>
        <h3 className="mt-[31px] text-center text-[28px] leading-8">Stevens Institute of Technology</h3>
        <h4 className="mt-[31px] text-center text-[24px] leading-7">2024-05-06 17:27:30</h4>
        <h4 className="mt-[31px] ml-3 text-[24px] leading-7">Temperature</h4>
        <h4 className="mt-[31px] mb-8 ml-3 text-[24px] leading-7">60°F</h4>
        <div className="font-normal"><WeatherMap /></div>
      </main>
      <div className="mt-auto h-0.5 bg-[#3b4a48]" />
    </div>
  );
}
